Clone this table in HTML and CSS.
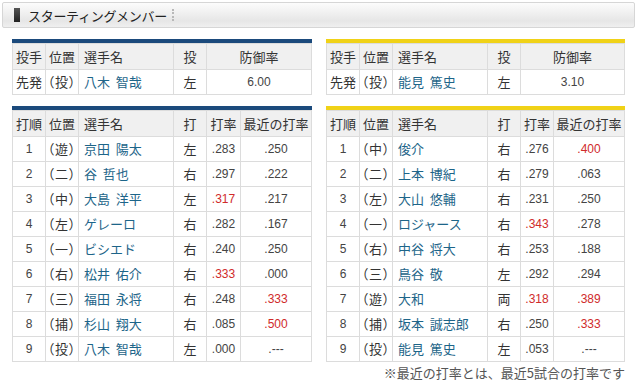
FILE: index.html
```html
<!DOCTYPE html>
<html lang="ja">
<head>
<meta charset="utf-8">
<link rel="stylesheet" href="styles.css">
</head>
<body>
<div class="page">
  <div class="title-box">
    <span class="title-mark"></span>
    <span class="title-text">スターティングメンバー</span>
    <span class="title-dots"></span>
  </div>
  <div class="columns">
    <div class="col col-left">
      <div class="panel panel-blue">
        <table class="tbl pitcher">
          <colgroup><col class="w33"><col class="w33"><col class="w95"><col class="w33"><col></colgroup>
          <tr class="head"><td>投手</td><td>位置</td><td class="name">選手名</td><td>投</td><td>防御率</td></tr>
          <tr><td>先発</td><td class="pos">（投）</td><td class="name link">八木&nbsp; 智哉</td><td>左</td><td class="num">6.00</td></tr>
        </table>
      </div>
      <div class="panel panel-blue">
        <table class="tbl lineup">
          <colgroup><col class="w33"><col class="w33"><col class="w95"><col class="w33"><col class="w34"><col></colgroup>
          <tr class="head"><td>打順</td><td>位置</td><td class="name">選手名</td><td>打</td><td>打率</td><td>最近の打率</td></tr>
          <tr><td class="num">1</td><td class="pos">（遊）</td><td class="name link">京田&nbsp; 陽太</td><td>左</td><td class="num">.283</td><td class="num">.250</td></tr>
          <tr><td class="num">2</td><td class="pos">（二）</td><td class="name link">谷&nbsp; 哲也</td><td>右</td><td class="num">.297</td><td class="num">.222</td></tr>
          <tr><td class="num">3</td><td class="pos">（中）</td><td class="name link">大島&nbsp; 洋平</td><td>左</td><td class="num red">.317</td><td class="num">.217</td></tr>
          <tr><td class="num">4</td><td class="pos">（左）</td><td class="name link">ゲレーロ</td><td>右</td><td class="num">.282</td><td class="num">.167</td></tr>
          <tr><td class="num">5</td><td class="pos">（一）</td><td class="name link">ビシエド</td><td>右</td><td class="num">.240</td><td class="num">.250</td></tr>
          <tr><td class="num">6</td><td class="pos">（右）</td><td class="name link">松井&nbsp; 佑介</td><td>右</td><td class="num red">.333</td><td class="num">.000</td></tr>
          <tr><td class="num">7</td><td class="pos">（三）</td><td class="name link">福田&nbsp; 永将</td><td>右</td><td class="num">.248</td><td class="num red">.333</td></tr>
          <tr><td class="num">8</td><td class="pos">（捕）</td><td class="name link">杉山&nbsp; 翔大</td><td>右</td><td class="num">.085</td><td class="num red">.500</td></tr>
          <tr><td class="num">9</td><td class="pos">（投）</td><td class="name link">八木&nbsp; 智哉</td><td>左</td><td class="num">.000</td><td class="num">.---</td></tr>
        </table>
      </div>
    </div>
    <div class="col col-right">
      <div class="panel panel-yellow">
        <table class="tbl pitcher">
          <colgroup><col class="w33"><col class="w33"><col class="w95"><col class="w33"><col></colgroup>
          <tr class="head"><td>投手</td><td>位置</td><td class="name">選手名</td><td>投</td><td>防御率</td></tr>
          <tr><td>先発</td><td class="pos">（投）</td><td class="name link">能見&nbsp; 篤史</td><td>左</td><td class="num">3.10</td></tr>
        </table>
      </div>
      <div class="panel panel-yellow">
        <table class="tbl lineup">
          <colgroup><col class="w33"><col class="w33"><col class="w95"><col class="w33"><col class="w33"><col></colgroup>
          <tr class="head"><td>打順</td><td>位置</td><td class="name">選手名</td><td>打</td><td>打率</td><td>最近の打率</td></tr>
          <tr><td class="num">1</td><td class="pos">（中）</td><td class="name link">俊介</td><td>右</td><td class="num">.276</td><td class="num red">.400</td></tr>
          <tr><td class="num">2</td><td class="pos">（二）</td><td class="name link">上本&nbsp; 博紀</td><td>右</td><td class="num">.279</td><td class="num">.063</td></tr>
          <tr><td class="num">3</td><td class="pos">（左）</td><td class="name link">大山&nbsp; 悠輔</td><td>右</td><td class="num">.231</td><td class="num">.250</td></tr>
          <tr><td class="num">4</td><td class="pos">（一）</td><td class="name link">ロジャース</td><td>右</td><td class="num red">.343</td><td class="num">.278</td></tr>
          <tr><td class="num">5</td><td class="pos">（右）</td><td class="name link">中谷&nbsp; 将大</td><td>右</td><td class="num">.253</td><td class="num">.188</td></tr>
          <tr><td class="num">6</td><td class="pos">（三）</td><td class="name link">鳥谷&nbsp; 敬</td><td>左</td><td class="num">.292</td><td class="num">.294</td></tr>
          <tr><td class="num">7</td><td class="pos">（遊）</td><td class="name link">大和</td><td>両</td><td class="num red">.318</td><td class="num red">.389</td></tr>
          <tr><td class="num">8</td><td class="pos">（捕）</td><td class="name link">坂本&nbsp; 誠志郎</td><td>右</td><td class="num">.250</td><td class="num red">.333</td></tr>
          <tr><td class="num">9</td><td class="pos">（投）</td><td class="name link">能見&nbsp; 篤史</td><td>左</td><td class="num">.053</td><td class="num">.---</td></tr>
        </table>
      </div>
      <p class="note">※最近の打率とは、最近5試合の打率です</p>
    </div>
  </div>
</div>
</body>
</html>
```

FILE: styles.css
```css
html, body {
  margin: 0;
  padding: 0;
  background: #fff;
}
body {
  font-family: "Noto Sans CJK JP", "Liberation Sans", sans-serif;
  font-size: 13px;
  color: #333;
}
.page {
  padding: 2px 4px 0 2px;
}
.title-box {
  box-sizing: border-box;
  height: 26px;
  border: 1px solid #d6d6d6;
  border-radius: 2px;
  background: linear-gradient(#fcfcfc 0%, #f2f2f2 35%, #e6e6e6 75%, #efefef 100%);
  display: flex;
  align-items: center;
  padding-left: 11px;
}
.title-mark {
  width: 6px;
  height: 14px;
  background: linear-gradient(#555, #222);
}
.title-text {
  margin-left: 8px;
  font-size: 13px;
  color: #222;
  letter-spacing: -0.3px;
  line-height: 1;
}
.title-dots {
  margin-left: 5px;
  width: 0;
  height: 12px;
  border-left: 2px dotted #b8b8b8;
}
.columns {
  display: flex;
  gap: 14px;
  margin: 11px 0 0 10px;
}
.col {
  display: flex;
  flex-direction: column;
  gap: 11px;
}
.col-left { width: 300px; }
.col-right { width: 299px; }
.panel-blue { border-top: 4px solid #1b4a7c; }
.panel-yellow { border-top: 4px solid #f0d217; }
.tbl {
  width: 100%;
  border-collapse: collapse;
  table-layout: fixed;
}
.w33 { width: 33px; }
.w34 { width: 34px; }
.w95 { width: 95px; }
.tbl td {
  border: 1px solid #dcdcdc;
  height: 24px;
  padding: 0;
  text-align: center;
  white-space: nowrap;
  line-height: 16px;
  color: #333;
}
.tbl tr.head td {
  background: #f0f0f0;
  height: 25px;
  color: #333;
}
.tbl td.name {
  text-align: left;
  padding-left: 5px;
}
.tbl td.link { color: #1d6589; }
.tbl td.pos {
  font-feature-settings: "palt" 1;
  letter-spacing: 1px;
}
.tbl td.num {
  font-family: "Liberation Sans", sans-serif;
  font-size: 12px;
  color: #444;
}
.tbl td.red { color: #d02b2b; }
.note {
  margin: -8px 0 0;
  text-align: right;
  font-size: 13px;
  color: #555;
  line-height: 16px;
}
```
